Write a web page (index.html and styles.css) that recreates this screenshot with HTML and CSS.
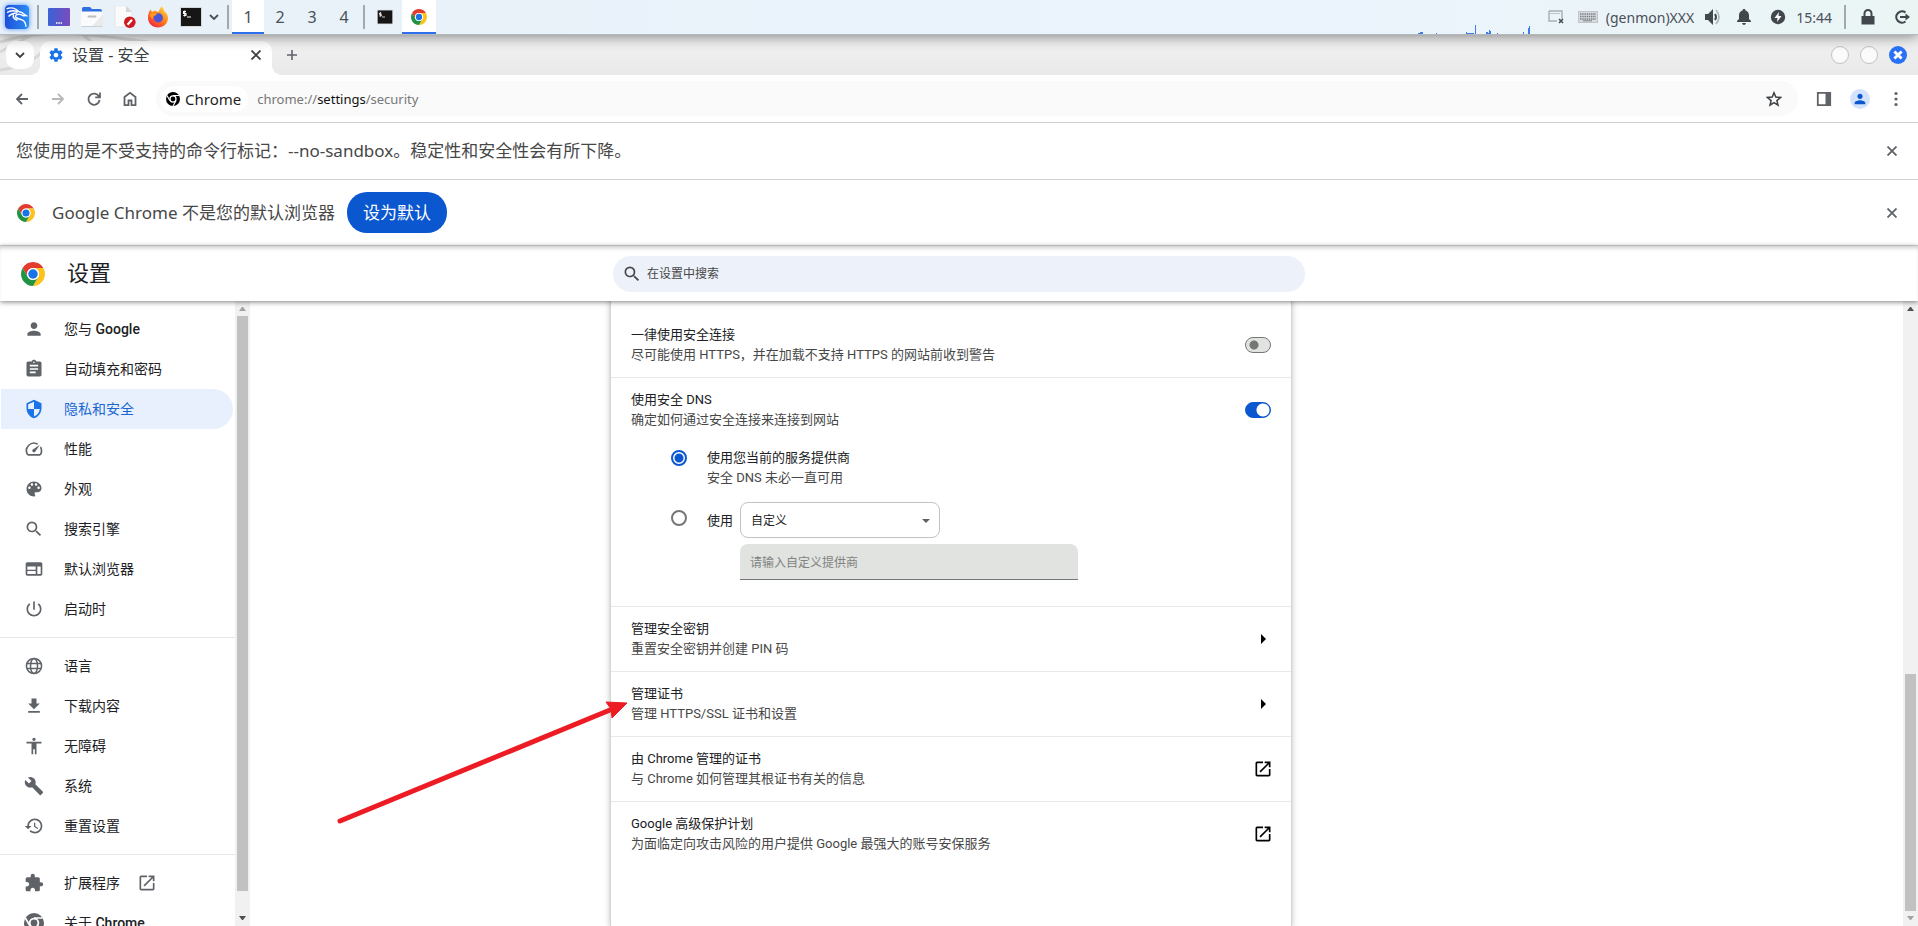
FILE: index.html
```html
<!DOCTYPE html>
<html lang="zh-CN">
<head>
<meta charset="utf-8">
<title>设置 - 安全</title>
<link rel="stylesheet" href="styles.css">
</head>
<body>
<svg class="defs" aria-hidden="true">
  <symbol id="chrome" viewBox="2 2 44 44">
    <path fill="#e33b2e" d="M24 13H43.050A22 22 0 0 0 4.950 13L14.470 29.500A11 11 0 0 1 24 13z"/>
    <path fill="#fcc31e" d="M43.050 13H24A11 11 0 0 1 33.530 29.500L24 46A22 22 0 0 0 43.050 13z"/>
    <path fill="#229342" d="M4.950 13A22 22 0 0 0 24 46L33.530 29.500A11 11 0 0 1 14.470 29.500z"/>
    <circle cx="24" cy="24" r="11" fill="#fff"/><circle cx="24" cy="24" r="8.700" fill="#1a73e8"/>
  </symbol>
  <symbol id="chrome-mono" viewBox="2 2 44 44">
    <circle cx="24" cy="24" r="22" fill="currentColor"/>
    <path d="M24 13H43M14.470 29.500L5 13M33.530 29.500L24 46" stroke="#fff" stroke-width="3.500" fill="none"/>
    <circle cx="24" cy="24" r="11.500" fill="#fff"/><circle cx="24" cy="24" r="7.500" fill="currentColor"/>
  </symbol>
  <symbol id="close" viewBox="0 0 10 10"><path d="M.5.5l9 9M9.500.5l-9 9" stroke="currentColor" stroke-width="1.800" fill="none"/></symbol>
  <symbol id="chevron" viewBox="0 0 10 10"><path d="M1 3l4 4 4-4" stroke="currentColor" stroke-width="1.800" fill="none"/></symbol>
  <symbol id="search" viewBox="0 0 24 24"><path d="M15.500 14h-.79l-.28-.27A6.470 6.470 0 0 0 16 9.500 6.500 6.500 0 1 0 9.500 16c1.610 0 3.090-.59 4.230-1.570l.27.28v.79l5 4.990L20.490 19l-4.990-5zm-6 0C7.010 14 5 11.990 5 9.500S7.010 5 9.500 5 14 7.010 14 9.500 11.990 14 9.500 14z"/></symbol>
  <symbol id="open" viewBox="0 0 24 24"><path d="M19 19H5V5h7V3H5c-1.110 0-2 .9-2 2v14c0 1.100.89 2 2 2h14c1.100 0 2-.9 2-2v-7h-2v7zM14 3v2h3.590l-9.830 9.830 1.410 1.410L19 6.410V10h2V3h-7z"/></symbol>
  <symbol id="person" viewBox="0 0 24 24"><path d="M12 12c2.210 0 4-1.790 4-4s-1.790-4-4-4-4 1.790-4 4 1.790 4 4 4zm0 2c-2.670 0-8 1.340-8 4v2h16v-2c0-2.660-5.330-4-8-4z"/></symbol>
  <symbol id="terminal" viewBox="0 0 22 20"><rect width="22" height="20" rx="1" fill="#d4d6d8"/><rect x="1" y="1" width="20" height="18" fill="#161616"/><path d="M6 4.500H3.500v2H6v2H3.300M4.700 3.500v6M7 10h4" stroke="#fff" stroke-width="1.100" fill="none"/></symbol>
</svg>

<header class="panel">
  <svg class="kali" viewBox="0 0 24 24"><defs><linearGradient id="kg" x1="0" y1="0" x2="1" y2="0"><stop offset="0" stop-color="#1d4fd8"/><stop offset="1" stop-color="#2b8cf5"/></linearGradient></defs><rect width="24" height="24" rx="3" fill="url(#kg)"/><path d="M1.500 3.800C6 1.800 11 3.300 14 6.800M2 7.500c3.500-2.200 7-2.200 11-.5M3.500 11.500c2-2.300 5-3.300 8.500-3.500M14 6.800c2 .2 4 .8 5.200 2.600l2 1.200-2.800.2C15 8.500 11 8.800 10.500 11c-.4 2.500 3.500 2.800 6.500 3.800 2.600 1 3.800 3.700 4 7M8.500 9.500c-.8 3 1 5 4 5.800" fill="none" stroke="#fff" stroke-width="1.400"/></svg>
  <i class="rule"></i>
  <div class="apps">
  <svg class="app" viewBox="0 0 22 22"><defs><linearGradient id="dg"><stop offset="0" stop-color="#3a63d6"/><stop offset="1" stop-color="#7b4bbd"/></linearGradient></defs><rect y="2" width="22" height="18" rx="1" fill="url(#dg)"/><path d="M8 17h1.500m.8 0h1.500m.8 0H14" stroke="#fff" stroke-width="1.500"/></svg>
  <svg class="app" viewBox="0 0 22 22"><path d="M1 8V2.500Q1 1 2.500 1H9l2 2h8q2 0 2 2v3z" fill="#2f6fe0"/><rect y="5.500" width="22" height="15" rx="1" fill="#fafbfc"/><path d="M22 8v12.500H11z" fill="#e8eaec"/><path d="M7.500 10.500h7" stroke="#b9bcc0" stroke-width="1.800" stroke-linecap="round"/><path d="M.5 20.500h21" stroke="#c9d0d6"/></svg>
  <svg class="app" viewBox="0 0 22 22"><path d="M1 0h11l6 6v15H1z" fill="#fbfbfb" stroke="#dcdfe2" stroke-width=".7"/><path d="M12 0v6h6z" fill="#d3d6d8"/><circle cx="15.800" cy="16.200" r="5.800" fill="#cf1b1f"/><path d="M13.500 18.700l4.500-5" stroke="#fff" stroke-width="2.200"/></svg>
  <svg class="app" viewBox="0 0 22 22"><defs><linearGradient id="fg" x1=".9" y1="0" x2=".2" y2="1"><stop offset="0" stop-color="#ffe14a"/><stop offset=".45" stop-color="#ff8a1e"/><stop offset="1" stop-color="#f0233c"/></linearGradient></defs><path d="M14.500.5c2 1.500 2.500 3.500 3 5 1.500 1 3.500 3 3.500 6.500 0 5.500-4.500 9.500-10 9.500S1 17.500 1 12C1 8 2 5.500 3.500 3.500L5 6l3-1.500C9.500 6 11 5 11.500 6c1-2 1.200-3.500 3-5.500z" fill="url(#fg)"/><circle cx="11.300" cy="11.800" r="4.600" fill="#4b55d8"/><path d="M3 8c3-1.500 5-1 7 .2-1.500 1.600-4 1-4 3.800C5 14 3 11 3 8z" fill="#ff9a1f"/></svg>
  <svg class="app"><use href="#terminal"/></svg>
  </div>
  <svg class="tiny"><use href="#chevron"/></svg>
  <i class="rule"></i>
  <nav class="desks"><button class="on">1</button><button>2</button><button>3</button><button>4</button></nav>
  <i class="rule"></i>
  <div class="tasks"><button aria-label="终端"><svg class="small"><use href="#terminal"/></svg></button><button class="on" aria-label="Chrome"><svg class="small"><use href="#chrome"/></svg></button></div>
  <svg class="graph" viewBox="0 0 112 9" fill="#3f7bea"><path d="M0 8h2V7h3v2H0zM18 8h1v1h-1zM48 7h1v1h7v1h-8zM57 0h1v9h-1zM68 7h2v1h1V5h1v1h1v3h-5zM79 8h1v1h-1zM105 7h1v2h-1zM110 3h1V1h1v8h-2z"/></svg>
  <div class="tray">
    <svg class="w16" viewBox="0 0 16 16"><path d="M1 2h13v8M9 12H1V2M3 4v1m2-1v1m2-1v1m2-1v1m2-1v1" stroke="#a9aeb3" stroke-width="1.400" fill="none"/><path d="M11 10l4 4m0-4l-4 4" stroke="#4b4f55" stroke-width="1.600"/></svg>
    <svg class="w20" viewBox="0 0 20 12"><rect x=".5" y=".5" width="19" height="11" fill="#d7dade" stroke="#c1c5ca"/><path d="M2 3h16M2 5.500h16M2 8h16" stroke="#7b8088" stroke-width="1.500" stroke-dasharray="1.500 .7"/><path d="M5 9.800h9" stroke="#7b8088"/></svg>
    <span>(genmon)XXX</span>
    <svg class="w18" viewBox="0 0 18 18"><path d="M1 6h3l5-5v16l-5-5H1z" fill="#42464d"/><path d="M11 6q2 3 0 6" stroke="#42464d" stroke-width="2" fill="none"/><path d="M12 2q6 7 0 14" stroke="#b0b6ba" stroke-width="1.700" fill="none"/></svg>
    <svg class="w16" viewBox="0 0 16 16" fill="#42464d"><path d="M8 0c1 0 1.500.6 1.500 1.400C12 2.200 13 4 13 6.500V10l2 2v1H1v-1l2-2V6.500C3 4 4 2.200 6.500 1.400 6.500.6 7 0 8 0zM6 14h4q-.5 2-2 2t-2-2z"/></svg>
    <svg class="w16" viewBox="0 0 16 16"><circle cx="8" cy="8" r="7.200" fill="#42464d"/><path d="M9 3L4.500 9H7.500L7 13l4.500-6H8.500z" fill="#fff"/></svg>
    <time>15:44</time>
    <i class="rule"></i>
    <svg class="w16" viewBox="0 0 16 16"><path d="M1.500 7h13v8.500h-13z" fill="#42464d"/><path d="M4.500 7V4.500a3.500 3.500 0 0 1 7 0V7" stroke="#42464d" stroke-width="2" fill="none"/></svg>
    <svg class="w16" viewBox="0 0 16 16"><path d="M11.500 3.500a5.700 5.700 0 1 0 0 9M6 8h7" stroke="#42464d" stroke-width="2.200" fill="none"/><path d="M11.500 4.500v7L16 8z" fill="#42464d"/></svg>
  </div>
</header>

<div class="tabs">
  <svg class="swirl" viewBox="0 0 200 41" fill="none" stroke="#d8d8d8" stroke-width="3"><path d="M0 8Q40-4 90 1T170 12M0 36Q30 32 44 16M82 0l12 10M0 18L30 2"/></svg>
  <button class="tabsearch" aria-label="搜索标签页"><svg class="tiny"><use href="#chevron"/></svg></button>
  <div class="tab">
    <svg class="gear" viewBox="0 0 24 24" fill="#1a73e8"><path d="M19.430 12.980c.04-.32.07-.64.07-.98s-.03-.66-.07-.98l2.110-1.650c.19-.15.24-.42.12-.64l-2-3.460c-.12-.22-.39-.3-.61-.22l-2.490 1c-.52-.4-1.080-.73-1.690-.98l-.38-2.650C14.460 2.180 14.250 2 14 2h-4c-.25 0-.46.18-.49.42l-.38 2.650c-.61.25-1.170.59-1.690.98l-2.490-1c-.23-.09-.49 0-.61.22l-2 3.460c-.13.22-.07.49.12.64l2.110 1.650c-.04.32-.07.65-.07.98s.03.66.07.98l-2.110 1.650c-.19.15-.24.42-.12.64l2 3.460c.12.22.39.3.61.22l2.490-1c.52.4 1.080.73 1.690.98l.38 2.650c.03.24.24.42.49.42h4c.25 0 .46-.18.49-.42l.38-2.650c.61-.25 1.170-.59 1.690-.98l2.490 1c.23.09.49 0 .61-.22l2-3.460c.12-.22.07-.49-.12-.64l-2.110-1.650zM12 15.500c-1.930 0-3.500-1.570-3.500-3.500s1.570-3.500 3.500-3.500 3.500 1.570 3.500 3.500-1.570 3.500-3.500 3.500z"/></svg>
    <span>设置 - 安全</span>
    <button aria-label="关闭标签页"><svg class="tiny"><use href="#close"/></svg></button>
  </div>
  <button class="newtab" aria-label="新标签页"><svg class="tiny" viewBox="0 0 10 10"><path d="M5 0v10M0 5h10" stroke="currentColor" stroke-width="1.600"/></svg></button>
  <div class="winbtns"><button aria-label="最小化"></button><button aria-label="最大化"></button><button class="x" aria-label="关闭"><svg viewBox="0 0 10 10"><path d="M2 2l6 6m0-6L2 8" stroke="#fff" stroke-width="2.400"/></svg></button></div>
</div>

<div class="toolbar">
  <button aria-label="后退"><svg viewBox="0 0 16 16"><path d="M14 8H3m5-5L3 8l5 5" class="ln"/></svg></button>
  <button class="dim" aria-label="前进"><svg viewBox="0 0 16 16"><path d="M2 8h11M8 3l5 5-5 5" class="ln"/></svg></button>
  <button aria-label="重新加载"><svg viewBox="0 0 16 16"><path d="M13 5.500A5.600 5.600 0 1 0 13.600 9M14 1.500v4.800H9.200" class="ln"/></svg></button>
  <button aria-label="主页"><svg viewBox="0 0 16 16"><path d="M2.500 14.200V6L8 1.800 13.500 6v8.200h-4V9.500h-3v4.700z" class="ln"/></svg></button>
  <div class="omnibox">
    <span class="chip"><svg><use href="#chrome-mono"/></svg>Chrome</span>
    <span class="url">chrome://<b>settings</b>/security</span>
    <button aria-label="收藏"><svg viewBox="0 0 16 16"><path d="M8 1.800l1.800 4.300 4.700.4-3.600 3.100 1.100 4.600L8 11.700l-4 2.500 1.100-4.600L1.500 6.500l4.700-.4z" stroke="#3c4043" stroke-width="1.500" fill="none"/></svg></button>
  </div>
  <button aria-label="侧边栏"><svg viewBox="0 0 16 16"><path d="M1.800 1.800h12.400v12.400H1.800z" class="ln"/><path d="M9.500 1.500H14v13H9.500z" fill="currentColor"/></svg></button>
  <button class="me" aria-label="用户"><svg><use href="#person"/></svg></button>
  <button aria-label="菜单"><svg viewBox="0 0 16 16" fill="currentColor"><circle cx="8" cy="2.500" r="1.600"/><circle cx="8" cy="8" r="1.600"/><circle cx="8" cy="13.500" r="1.600"/></svg></button>
</div>

<div class="infobar"><p>您使用的是不受支持的命令行标记：--no-sandbox。稳定性和安全性会有所下降。</p><button class="dismiss" aria-label="关闭"><svg class="tiny"><use href="#close"/></svg></button></div>
<div class="infobar tall"><svg class="logo"><use href="#chrome"/></svg><p>Google Chrome 不是您的默认浏览器</p><button class="primary">设为默认</button><button class="dismiss" aria-label="关闭"><svg class="tiny"><use href="#close"/></svg></button></div>

<header class="top">
  <div class="brand"><svg><use href="#chrome"/></svg><h1>设置</h1></div>
  <label class="searchbox"><svg><use href="#search"/></svg><input type="text" placeholder="在设置中搜索" aria-label="在设置中搜索"></label>
</header>

<div class="body">
  <div class="side">
    <nav>
      <a href="#p"><svg><use href="#person"/></svg><span>您与 <em>Google</em></span></a>
      <a href="#a"><svg viewBox="0 0 24 24"><path d="M19 3h-4.180C14.400 1.840 13.300 1 12 1c-1.300 0-2.400.84-2.820 2H5c-1.100 0-2 .9-2 2v14c0 1.100.9 2 2 2h14c1.100 0 2-.9 2-2V5c0-1.100-.9-2-2-2zm-7 0c.55 0 1 .45 1 1s-.45 1-1 1-1-.45-1-1 .45-1 1-1zm2 14H7v-2h7v2zm3-4H7v-2h10v2zm0-4H7V7h10v2z"/></svg>自动填充和密码</a>
      <a href="#s" class="sel"><svg viewBox="0 0 24 24"><path d="M12 1L3 5v6c0 5.550 3.840 10.740 9 12 5.160-1.260 9-6.450 9-12V5l-9-4zm0 10.990h7c-.53 4.120-3.280 7.790-7 8.940V12H5V6.300l7-3.110v8.800z"/></svg>隐私和安全</a>
      <a href="#f"><svg viewBox="0 0 24 24"><path d="M20.380 8.570l-1.230 1.850a8 8 0 0 1-.22 7.580H5.070A8 8 0 0 1 15.580 6.850l1.850-1.230A10 10 0 0 0 3.350 19a2 2 0 0 0 1.720 1h13.850a2 2 0 0 0 1.740-1 10 10 0 0 0-.27-10.440zM10.590 15.410a2 2 0 0 0 2.830 0l5.660-8.490-8.490 5.660a2 2 0 0 0 0 2.830z"/></svg>性能</a>
      <a href="#l"><svg viewBox="0 0 24 24"><path d="M12 3c-4.970 0-9 4.030-9 9s4.030 9 9 9c.83 0 1.500-.67 1.500-1.500 0-.39-.15-.74-.39-1.010-.23-.26-.38-.61-.38-.99 0-.83.67-1.500 1.500-1.500H16c2.760 0 5-2.240 5-5 0-4.420-4.030-8-9-8zm-5.500 9c-.83 0-1.500-.67-1.500-1.500S5.670 9 6.500 9 8 9.670 8 10.500 7.330 12 6.500 12zm3-4C8.670 8 8 7.330 8 6.500S8.670 5 9.500 5s1.500.67 1.500 1.500S10.330 8 9.500 8zm5 0c-.83 0-1.500-.67-1.500-1.500S13.670 5 14.500 5s1.500.67 1.500 1.500S15.330 8 14.500 8zm3 4c-.83 0-1.500-.67-1.500-1.500S16.670 9 17.500 9s1.500.67 1.500 1.500-.67 1.500-1.500 1.500z"/></svg>外观</a>
      <a href="#e"><svg><use href="#search"/></svg>搜索引擎</a>
      <a href="#b"><svg viewBox="0 0 24 24"><path d="M20 4H4c-1.100 0-1.990.9-1.990 2L2 18c0 1.100.9 2 2 2h16c1.100 0 2-.9 2-2V6c0-1.100-.9-2-2-2zm-6 14H4v-3.500h10V18zm0-5H4V9h10v4zm6 5h-4V9h4v9z"/></svg>默认浏览器</a>
      <a href="#o"><svg viewBox="0 0 24 24"><path d="M13 3h-2v10h2V3zm4.830 2.170l-1.420 1.420C17.990 7.860 19 9.810 19 12c0 3.870-3.130 7-7 7s-7-3.130-7-7c0-2.190 1.010-4.140 2.580-5.420L6.170 5.170C4.230 6.820 3 9.260 3 12c0 4.970 4.030 9 9 9s9-4.030 9-9c0-2.740-1.230-5.180-3.170-6.830z"/></svg>启动时</a>
      <hr>
      <a href="#g"><svg viewBox="0 0 24 24"><g fill="none" stroke="#5f6368" stroke-width="1.800"><circle cx="12" cy="12" r="9.100"/><ellipse cx="12" cy="12" rx="4.200" ry="9.100"/><path d="M3.500 9h17M3.500 15h17"/></g></svg>语言</a>
      <a href="#d"><svg viewBox="0 0 24 24"><path d="M19 9h-4V3H9v6H5l7 7 7-7zM5 18v2h14v-2H5z"/></svg>下载内容</a>
      <a href="#c"><svg viewBox="0 0 24 24"><path d="M12 2c1.100 0 2 .9 2 2s-.9 2-2 2-2-.9-2-2 .9-2 2-2zm9 7h-6v13h-2v-6h-2v6H9V9H3V7h18v2z"/></svg>无障碍</a>
      <a href="#y"><svg viewBox="0 0 24 24"><path d="M22.700 19l-9.100-9.100c.9-2.300.4-5-1.500-6.900-2-2-5-2.400-7.400-1.300L9 6 6 9 1.600 4.700C.4 7.100.9 10.100 2.900 12.100c1.900 1.900 4.600 2.400 6.900 1.500l9.100 9.100c.4.400 1 .4 1.400 0l2.300-2.300c.5-.4.5-1.100.1-1.400z"/></svg>系统</a>
      <a href="#r"><svg viewBox="0 0 24 24"><path d="M13 3c-4.970 0-9 4.030-9 9H1l3.890 3.890.07.14L9 12H6c0-3.870 3.130-7 7-7s7 3.130 7 7-3.130 7-7 7c-1.930 0-3.680-.79-4.940-2.060l-1.420 1.420C8.270 19.990 10.510 21 13 21c4.970 0 9-4.030 9-9s-4.030-9-9-9zm-1 5v5l4.280 2.540.72-1.210-3.500-2.080V8H12z"/></svg>重置设置</a>
      <hr>
      <a href="#x"><svg viewBox="0 0 24 24"><path d="M20.500 11H19V7c0-1.100-.9-2-2-2h-4V3.500C13 2.120 11.880 1 10.500 1S8 2.120 8 3.500V5H4c-1.100 0-1.990.9-1.990 2v3.800H3.500c1.490 0 2.700 1.210 2.700 2.700s-1.210 2.700-2.700 2.700H2V20c0 1.100.9 2 2 2h3.800v-1.500c0-1.490 1.210-2.700 2.700-2.700 1.490 0 2.700 1.210 2.700 2.700V22H17c1.100 0 2-.9 2-2v-4h1.500c1.380 0 2.500-1.120 2.500-2.500S21.880 11 20.500 11z"/></svg>扩展程序<svg class="ext"><use href="#open"/></svg></a>
      <a href="#z"><svg><use href="#chrome-mono"/></svg><span>关于 <em>Chrome</em></span></a>
    </nav>
    <div class="scroll"><i class="up off"></i><i class="thumb"></i><i class="gap"></i><i class="down"></i></div>
  </div>

  <main class="card">
    <div class="row"><label for="https"><b>一律使用安全连接</b><small>尽可能使用 HTTPS，并在加载不支持 HTTPS 的网站前收到警告</small></label><input type="checkbox" class="toggle" id="https"></div>
    <section class="dns">
      <div class="row"><label for="dns"><b>使用安全 DNS</b><small>确定如何通过安全连接来连接到网站</small></label><input type="checkbox" class="toggle" id="dns" checked></div>
      <div class="choice"><input type="radio" name="p" id="cur" checked><label for="cur"><b>使用您当前的服务提供商</b><small>安全 DNS 未必一直可用</small></label></div>
      <div class="choice custom"><input type="radio" name="p" id="cus"><label for="cus">使用</label>
        <div class="fields"><div class="selectbox"><select aria-label="提供商"><option>自定义</option></select></div><input type="text" disabled placeholder="请输入自定义提供商" aria-label="自定义提供商"></div></div>
    </section>
    <a class="row" href="#keys"><span><b>管理安全密钥</b><small>重置安全密钥并创建 PIN 码</small></span><svg viewBox="0 0 20 20"><path d="M8 5l5 5-5 5z"/></svg></a>
    <a class="row" href="#certs"><span><b>管理证书</b><small>管理 HTTPS/SSL 证书和设置</small></span><svg viewBox="0 0 20 20"><path d="M8 5l5 5-5 5z"/></svg></a>
    <a class="row" href="#root"><span><b>由 Chrome 管理的证书</b><small>与 Chrome 如何管理其根证书有关的信息</small></span><svg><use href="#open"/></svg></a>
    <a class="row" href="#adv"><span><b>Google 高级保护计划</b><small>为面临定向攻击风险的用户提供 Google 最强大的账号安保服务</small></span><svg><use href="#open"/></svg></a>
    <svg class="pointer" viewBox="0 0 300 130"><path d="M10 125L280 14" stroke="#ed1c24" stroke-width="5" stroke-linecap="round"/><path d="M297 7L276 6l5 7 1 9z" fill="#ed1c24" stroke="#ed1c24"/></svg>
  </main>
  <div class="rest"><div class="scroll page"><i class="up"></i><i class="gap"></i><i class="thumb"></i><i class="down off"></i></div></div>
</div>
</body>
</html>
```
FILE: styles.css
```css
* { box-sizing: border-box; }
body {
  margin: 0; height: 100vh; overflow: hidden; display: flex; flex-direction: column;
  background: #fff; color: #202124;
  font-family: "Noto Sans", "Noto Sans CJK SC", sans-serif;
}
button { border: 0; padding: 0; background: none; font: inherit; color: inherit; display: flex; align-items: center; justify-content: center; }
svg { flex: none; display: block; }
p, h1 { margin: 0; font-weight: 400; }
.defs { position: absolute; width: 0; height: 0; }
.tiny { width: 10px; height: 10px; }

/* desktop panel */
.panel {
  position: relative; z-index: 3; flex: none; height: 34px; display: flex; align-items: center;
  padding: 0 8px 0 5px; color: #4b4f57; font-size: 14px;
  background: linear-gradient(90deg, #e8f1f8, #ebf4fc 70%, #eaf5f4);
  box-shadow: 0 1px 0 #b4b8bb, 0 2px 14px rgba(0, 0, 0, .5);
}
.kali { width: 24px; height: 24px; box-shadow: 0 0 5px #4d8df7; border-radius: 4px; margin-right: 8px; }
.rule { flex: none; width: 2px; height: 24px; background: #a3a8ad; }
.apps { display: flex; gap: 11px; margin-left: 9px; }
.app { width: 22px; height: 22px; }
.panel > .tiny { margin: 0 8px 0 7px; }
.desks { display: flex; align-self: stretch; margin: 0 3px; font-size: 16px; }
.desks button { width: 32px; }
.tasks { display: flex; align-self: stretch; margin-left: 3px; }
.tasks button { width: 34px; }
.small { width: 16px; height: 16px; }
.desks .on, .tasks .on { background: #fff; box-shadow: inset 0 -2px #2f6fee; }
.graph { width: 112px; height: 9px; align-self: flex-end; margin-left: auto; margin-right: 14px; }
.tray { display: flex; align-items: center; gap: 10px; }
.w16 { width: 16px; height: 16px; margin: 0 4px; }
.w18 { width: 18px; height: 18px; }
.w20 { width: 20px; height: 12px; }
.tray span { margin-left: -2px; }
.tray time { margin: 0 2px 0 -4px; }
.tray .w16:last-child { margin-right: 0; }

/* tab strip */
.tabs { position: relative; flex: none; height: 41px; display: flex; align-items: flex-end; padding: 0 11px 0 6px; background: linear-gradient(#f2f2f2, #e9e9e9); color: #3c4043; }
.swirl { position: absolute; left: 0; top: 0; width: 200px; height: 41px; }
.tabsearch { position: relative; width: 28px; height: 28px; border-radius: 10px; background: #fff; margin: 0 6px 6px 0; }
.tab { position: relative; width: 232px; height: 34px; display: flex; align-items: center; padding: 0 11px 6px 8px; background: #fff; border-radius: 10px 10px 0 0; font-size: 16px; line-height: 24px; }
.tab::before, .tab::after { content: ""; position: absolute; bottom: 0; width: 10px; height: 10px; }
.tab::before { left: -10px; background: radial-gradient(circle at 0 0, transparent 10px, #fff 10px); }
.tab::after { right: -10px; background: radial-gradient(circle at 100% 0, transparent 10px, #fff 10px); }
.gear { width: 16px; height: 16px; margin-right: 8px; }
.tab button { margin-left: auto; }
.newtab { position: relative; width: 40px; height: 40px; color: #5f6368; }
.winbtns { display: flex; gap: 11px; margin: 0 0 11px auto; }
.winbtns button { width: 18px; height: 18px; border-radius: 9px; border: 1px solid #c2c2c2; background: #fbfbfb; }
.winbtns .x { background: #2a72f5; border: 0; }
.x svg { width: 12px; height: 12px; }

/* toolbar */
.toolbar { flex: none; height: 48px; display: flex; align-items: center; gap: 8px; padding: 0 8px; background: #fff; border-bottom: 1px solid #d0d0d0; color: #5f6368; }
.toolbar button { width: 28px; height: 28px; }
.toolbar button svg { width: 16px; height: 16px; }
.ln { fill: none; stroke: currentColor; stroke-width: 1.8px; }
.dim { opacity: .45; }
.omnibox { flex: 1; height: 35px; margin: 0 4px; display: flex; align-items: center; gap: 9px; padding: 0 10px 0 5px; border-radius: 18px; background: #fafafa; }
.omnibox button { margin-left: auto; }
.chip { display: flex; align-items: center; gap: 5px; height: 26px; padding: 0 7px 0 5px; border-radius: 13px; background: #fff; color: #1f1f1f; font-size: 15px; }
.chip svg { width: 14px; height: 14px; color: #000; }
.url { font-size: 13px; color: #777; }
.url b { font-weight: 400; color: #111; }
.toolbar .me { width: 20px; height: 20px; border-radius: 50%; background: #d3e3fd; margin: 0 4px; }
.toolbar .me svg { fill: #0b57d0; }

/* info bars */
.infobar { flex: none; height: 57px; display: flex; align-items: center; padding: 0 21px 0 16px; border-bottom: 1px solid #d0d0d0; color: #474747; font-size: 17px; line-height: 24px; }
.infobar.tall { height: 66px; border-bottom-color: #d8d8d8; }
.logo { width: 18px; height: 18px; margin: 0 17px 0 1px; }
.primary { height: 41px; padding: 0 16px; margin-left: 12px; border-radius: 20px; background: #0b57d0; color: #fff; }
.dismiss { margin-left: auto; color: #5f6368; }

/* settings header */
.top, .body { font-family: Roboto, "Noto Sans CJK SC", sans-serif; }
.top { position: relative; z-index: 2; flex: none; height: 55px; display: grid; grid-template-columns: 1fr minmax(auto, 692px) 1fr; align-items: center; background: #fff; box-shadow: inset 0 4px 4px -2px rgba(0, 0, 0, .2), 0 1px 5px rgba(0, 0, 0, .5); }
.brand { display: flex; align-items: center; gap: 22px; padding-left: 21px; }
.brand svg { width: 24px; height: 24px; }
.brand h1 { font-size: 22px; line-height: 32px; }
.searchbox { display: flex; align-items: center; gap: 5px; height: 36px; padding: 0 9px; border-radius: 18px; background: #ecf1fa; }
.searchbox svg { width: 20px; height: 20px; fill: #474747; }
input[type=text] { font: 12px Roboto, "Noto Sans CJK SC", sans-serif; border: 0; background: none; }
.searchbox input { flex: 1; min-width: 0; padding: 0; outline: 0; }
.searchbox input::placeholder { color: #474747; }

.body { flex: 1; min-height: 0; display: flex; overflow: hidden; }
.side, .rest { flex: 1 1 0; display: flex; min-width: 0; }
.rest { flex-basis: 16px; justify-content: flex-end; }
.side nav { width: 235px; padding: 8px 0; overflow: hidden; font-size: 14px; line-height: 20px; }
.side em { font-style: normal; font-weight: 500; }
.side a { display: flex; align-items: center; height: 40px; margin: 0 2px 0 1px; padding-left: 23px; border-radius: 0 20px 20px 0; color: #202124; text-decoration: none; }
.side a svg { width: 20px; height: 20px; margin-right: 20px; fill: #5f6368; color: #5f6368; }
.side a .ext { margin: 0 0 0 17px; }
.side .sel { background: #e8f0fe; color: #1967d2; }
.side .sel svg { fill: #1a73e8; }
hr { margin: 8px 0; border: 0; border-top: 1px solid #e6e6e6; }
.scroll { width: 15px; height: 100%; display: flex; flex-direction: column; align-items: center; background: #f1f1f1; }
.thumb { width: 11px; flex: 575; background: #c1c1c1; }
.gap { flex: 20; }
.page .thumb { flex: 237; }
.page .gap { flex: 358; }
.up, .down { flex: none; width: 15px; height: 15px; background: #505050; clip-path: polygon(4px 10px, 11px 10px, 8px 6px, 7px 6px); }
.down { clip-path: polygon(4px 5px, 11px 5px, 8px 9px, 7px 9px); }
.off { background: #a3a3a3; }

/* content card */
.card { position: relative; flex: none; width: 680px; padding-top: 12px; box-shadow: 0 0 0 1px #d4d4d4, 0 0 6px 1px rgba(0, 0, 0, .25); font-size: 13px; line-height: 20px; }
.row { display: flex; align-items: center; justify-content: space-between; height: 64px; padding: 0 20px; color: #202124; text-decoration: none; }
.card > .row + .row, .dns, .dns + .row { border-top: 1px solid #e9e9e9; height: 65px; }
.card .dns { height: 229px; }
.row svg { width: 20px; height: 20px; margin-right: -2px; }
.card b, .card small { display: block; font-weight: 400; font-size: 13px; }
.card small { color: #474747; }
.card input[type=checkbox], .card input[type=radio] { appearance: none; margin: 0; flex: none; }
.toggle { width: 26px; height: 16px; border-radius: 8px; border: 1px solid #747775; background: radial-gradient(circle at 8px 7px, #747775 4px, #e1e3e1 5px); }
.toggle:checked { border-color: #0b57d0; background: radial-gradient(circle at 17px 7px, #fff 6px, #0b57d0 7px); }
.choice { display: flex; padding: 6px 0 0 60px; }
.card input[type=radio] { width: 16px; height: 16px; border: 2px solid #747775; border-radius: 8px; margin: 2px 20px 0 0; }
.card input[type=radio]:checked { border-color: #0b57d0; background: radial-gradient(circle, #0b57d0 4px, #fff 5px); }
.custom { padding-top: 14px; }
.card .custom > input { margin-top: 8px; }
.custom > label { padding-top: 9px; margin-right: 7px; }
.fields { display: grid; gap: 6px; }
.selectbox { position: relative; width: 200px; }
.selectbox::after { content: ""; position: absolute; right: 10px; top: 17px; border: 4px solid transparent; border-top-color: #5f6368; border-bottom: 0; }
select { appearance: none; width: 100%; height: 36px; padding: 2px 10px 0; border: 1px solid #c0c3c0; border-radius: 8px; background: #fff; color: #1f1f1f; font: 12px Roboto, "Noto Sans CJK SC", sans-serif; }
.fields input { width: 338px; height: 36px; padding: 2px 10px 0; border-bottom: 1px solid #747775; border-radius: 8px 8px 0 0; background: #e1e3e1; }
.fields input::placeholder { color: #80827f; }
.pointer { position: absolute; left: -281px; top: 395px; width: 300px; height: 130px; }
```
